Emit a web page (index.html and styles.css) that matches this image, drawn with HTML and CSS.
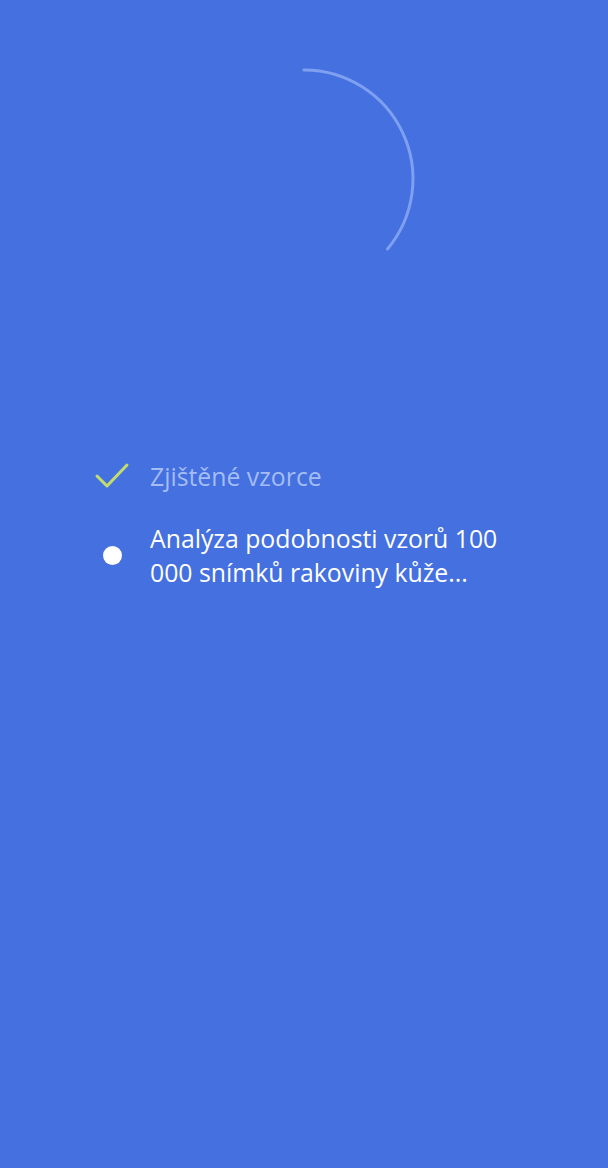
FILE: index.html
```html
<!DOCTYPE html>
<html lang="cs">
<head>
<meta charset="utf-8">
<link rel="stylesheet" href="styles.css">
</head>
<body>
<main class="screen">
  <div class="spinner">
    <svg width="240" height="240" viewBox="0 0 240 240">
      <path d="M120 11 A109 109 0 0 1 203.5 190" fill="none" stroke="#7f9ff0" stroke-width="3" stroke-linecap="round"/>
    </svg>
  </div>
  <ul class="steps">
    <li class="step done">
      <span class="icon">
        <svg width="36" height="30" viewBox="0 0 36 30">
          <path d="M3 15 L13 25 L33 4" fill="none" stroke="#c3dc6e" stroke-width="3" stroke-linecap="round" stroke-linejoin="round"/>
        </svg>
      </span>
      <span class="label">Zjištěné vzorce</span>
    </li>
    <li class="step active">
      <span class="icon"><span class="dot"></span></span>
      <span class="label">Analýza podobnosti vzorů 100 000 snímků rakoviny kůže...</span>
    </li>
  </ul>
</main>
</body>
</html>
```
FILE: styles.css
```css
html, body {
  margin: 0;
  padding: 0;
  background: #4470e0;
}
.screen {
  width: 608px;
  height: 1168px;
  background: #4470e0;
  font-family: "Open Sans", "Noto Sans", sans-serif;
  overflow: hidden;
}
.spinner {
  display: flex;
  justify-content: center;
  padding-top: 59px;
}
.spinner svg {
  display: block;
}
.steps {
  list-style: none;
  margin: 160px 0 0 0;
  padding: 0 0 0 92px;
  display: flex;
  flex-direction: column;
  gap: 28px;
}
.step {
  display: flex;
  align-items: center;
  gap: 18px;
}
.icon {
  width: 40px;
  display: flex;
  justify-content: center;
  align-items: center;
  flex: none;
}
.icon svg { display: block; }
.dot {
  width: 19px;
  height: 19px;
  border-radius: 50%;
  background: #ffffff;
}
.label {
  font-size: 24.8px;
  line-height: 34px;
  width: 370px;
}
.done .label {
  color: #a5bdf5;
}
.active .label {
  color: #ffffff;
}
```
